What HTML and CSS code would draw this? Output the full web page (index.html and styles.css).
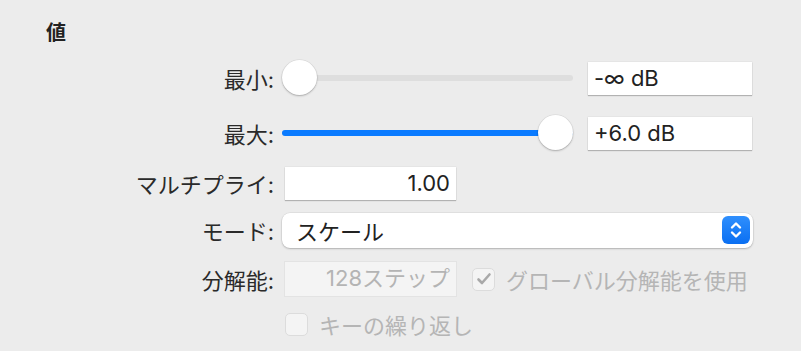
FILE: index.html
```html
<!DOCTYPE html>
<html lang="ja">
<head>
  <meta charset="UTF-8" />
  <title>値</title>
  <link rel="stylesheet" href="styles.css">
</head>
<body>
  <div class="panel">
    <h2 class="title">値</h2>

    <div class="row row-min">
      <label class="label">最小:</label>
      <div class="slider">
        <div class="track"></div>
        <div class="knob" style="left: 0%"></div>
      </div>
      <div class="field field-db">-∞ dB</div>
    </div>

    <div class="row row-max">
      <label class="label">最大:</label>
      <div class="slider">
        <div class="track"><div class="fill" style="width: 100%"></div></div>
        <div class="knob" style="left: 100%"></div>
      </div>
      <div class="field field-db">+6.0 dB</div>
    </div>

    <div class="row row-mult">
      <label class="label">マルチプライ:</label>
      <div class="field field-num">1.00</div>
    </div>

    <div class="row row-mode">
      <label class="label">モード:</label>
      <div class="popup">
        <span>スケール</span>
        <span class="stepper">
          <svg width="14" height="20" viewBox="0 0 14 20">
            <path d="M3 7.5 L7 3.5 L11 7.5 M3 12.5 L7 16.5 L11 12.5" fill="none" stroke="#fff" stroke-width="2.4" stroke-linecap="round" stroke-linejoin="round"/>
          </svg>
        </span>
      </div>
    </div>

    <div class="row row-res">
      <label class="label">分解能:</label>
      <div class="field field-num disabled">128ステップ</div>
      <span class="check checked">
        <svg width="16" height="14" viewBox="0 0 16 14">
          <path d="M2.5 7.5 L6 11 L13.5 2.5" fill="none" stroke="#a9a9a9" stroke-width="2.6" stroke-linecap="round" stroke-linejoin="round"/>
        </svg>
      </span>
      <span class="check-label">グローバル分解能を使用</span>
    </div>

    <div class="row row-repeat">
      <label class="label"></label>
      <span class="check check-first"></span>
      <span class="check-label">キーの繰り返し</span>
    </div>
  </div>
</body>
</html>
```

FILE: styles.css
```css
body {
  margin: 0;
  background-color: #ececec;
  font-family: "Inter", "Noto Sans CJK JP", sans-serif;
  color: #2a2a2a;
  font-size: 22px;
}
.panel {
  padding: 19px 0 0 0;
}
.title {
  margin: 0 0 0 46px;
  font-size: 20px;
  font-weight: bold;
  line-height: 28px;
  color: #222;
}
.row {
  display: flex;
  align-items: center;
  height: 36px;
}
.row-min { margin-top: 13px; }
.row-max { margin-top: 19px; }
.row-mult { margin-top: 14px; }
.row-mode { margin-top: 11px; }
.row-res { margin-top: 13px; }
.row-repeat { margin-top: 9px; }
.label {
  width: 274px;
  text-align: right;
  flex-shrink: 0;
  margin-right: 8px;
}
.slider {
  position: relative;
  width: 291px;
  height: 36px;
}
.track {
  position: absolute;
  left: 0;
  right: 0;
  top: 15px;
  height: 6px;
  border-radius: 3px;
  background: #dedede;
}
.fill {
  height: 100%;
  border-radius: 3px;
  background: #0a7bff;
}
.knob {
  position: absolute;
  top: 0;
  width: 35px;
  height: 35px;
  border-radius: 50%;
  background: #fff;
  box-shadow: 0 1px 2px rgba(0, 0, 0, 0.25), 0 0 0 0.5px rgba(0, 0, 0, 0.08);
}
.row-max .knob {
  margin-left: -35px;
}
.field {
  background: #fff;
  box-shadow: 0 1px 1px rgba(0, 0, 0, 0.22), 0 0 0 0.5px rgba(0, 0, 0, 0.06);
  height: 33px;
  line-height: 33px;
  box-sizing: border-box;
  padding: 0 6px;
  color: #222;
}
.field-db {
  margin-left: 15px;
  width: 164px;
}
.field-num {
  margin-left: 3px;
  width: 171px;
  text-align: right;
}
.field.disabled {
  background: #f4f4f4;
  box-shadow: 0 0 0 1px #e3e3e3;
  color: #b4b4b4;
  height: 34px;
}
.popup {
  display: flex;
  align-items: center;
  justify-content: space-between;
  width: 471px;
  height: 35px;
  box-sizing: border-box;
  padding: 0 3px 0 14px;
  background: #fff;
  border-radius: 8px;
  box-shadow: 0 1px 2px rgba(0, 0, 0, 0.22), 0 0 0 0.5px rgba(0, 0, 0, 0.08);
  color: #222;
}
.stepper {
  display: flex;
  align-items: center;
  justify-content: center;
  width: 28px;
  height: 28px;
  border-radius: 6px;
  background: linear-gradient(#2f8ffd, #0a6ff2);
}
.check {
  display: flex;
  align-items: center;
  justify-content: center;
  width: 23px;
  height: 23px;
  box-sizing: border-box;
  border-radius: 5px;
  background: #f4f4f4;
  border: 1px solid #dcdcdc;
  margin-left: 16px;
}
.check-first {
  margin-left: 3px;
}
.check-label {
  margin-left: 11px;
  color: #b5b5b5;
}
```
